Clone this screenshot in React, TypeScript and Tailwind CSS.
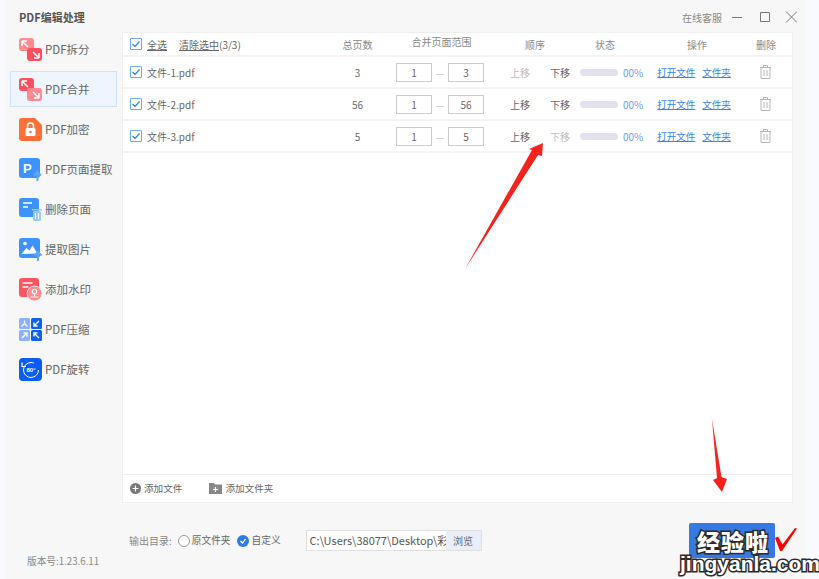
import type { ReactNode } from "react";

function SplitIcon({ merge = false }: { merge?: boolean }) {
    const a = merge ? "#ff4f5e" : "#ff8a90";
    const b = merge ? "#ff8a90" : "#ff4f5e";
    return (
        <svg width="23" height="23" viewBox="0 0 23 23">
            <rect x="0" y="0" width="15" height="13" rx="3" fill={a} />
            <rect x="8" y="10" width="15" height="13" rx="3" fill={b} />
            <path d="M3 3h5M3 3v5M3 3l6 6" stroke="#fff" strokeWidth="1.6" fill="none" />
            <path d="M20 20h-5M20 20v-5M20 20l-6-6" stroke="#fff" strokeWidth="1.6" fill="none" />
        </svg>
    );
}

function LockIcon() {
    return (
        <svg width="23" height="23" viewBox="0 0 23 23">
            <path d="M3 0h13l7 7v13a3 3 0 0 1-3 3H3a3 3 0 0 1-3-3V3a3 3 0 0 1 3-3z" fill="#ff7038" />
            <rect x="6.5" y="10" width="10" height="8" rx="1.5" fill="#fff" />
            <path d="M8.5 10V8a3 3 0 0 1 6 0v2" stroke="#fff" strokeWidth="1.5" fill="none" />
            <circle cx="11.5" cy="14" r="1.2" fill="#ff7038" />
        </svg>
    );
}

function PageIcon() {
    return (
        <svg width="23" height="23" viewBox="0 0 23 23">
            <rect x="0" y="0" width="21" height="20" rx="3" fill="#3b93fb" />
            <text x="4" y="14.5" fontSize="13" fontWeight="700" fill="#fff" fontFamily="Liberation Sans">P</text>
            <path d="M18.5 23v-8M15 17.5l3.5-3.5 3.5 3.5" stroke="#5fa8fb" strokeWidth="2" fill="none" />
        </svg>
    );
}

function DeleteIcon() {
    return (
        <svg width="23" height="23" viewBox="0 0 23 23">
            <rect x="0" y="0" width="20" height="19" rx="3" fill="#3b93fb" />
            <path d="M4 5h9M4 9h5" stroke="#fff" strokeWidth="1.6" />
            <path d="M13 11h10v1.5H13z" fill="#9cc8fd" />
            <rect x="14" y="13" width="8" height="10" rx="1.5" fill="#9cc8fd" />
            <path d="M16.5 15v6M19.5 15v6" stroke="#fff" strokeWidth="1" />
        </svg>
    );
}

function ImageIcon() {
    return (
        <svg width="23" height="23" viewBox="0 0 23 23">
            <rect x="0" y="0" width="21" height="20" rx="3" fill="#3b93fb" />
            <circle cx="6" cy="5.5" r="1.8" fill="#fff" />
            <path d="M2.5 16l5-6 3 2.5 3-5 5 8z" fill="#fff" />
            <path d="M19 23v-8M15.5 17.5l3.5-3.5 3.5 3.5" stroke="#5fa8fb" strokeWidth="2" fill="none" />
        </svg>
    );
}

function WatermarkIcon() {
    return (
        <svg width="23" height="23" viewBox="0 0 23 23">
            <rect x="0" y="0" width="20" height="19" rx="3" fill="#ff5560" />
            <path d="M3.5 5h10M3.5 9h6" stroke="#fff" strokeWidth="1.6" />
            <circle cx="15.5" cy="15.5" r="7.5" fill="#ff8a90" stroke="#fff" strokeWidth="0.8" />
            <circle cx="15.5" cy="13.5" r="2.2" fill="none" stroke="#fff" strokeWidth="1.2" />
            <path d="M11.5 19h8M15.5 15.5V18" stroke="#fff" strokeWidth="1.2" />
        </svg>
    );
}

function CompressIcon() {
    return (
        <svg width="23" height="23" viewBox="0 0 23 23">
            <rect x="0" y="0" width="11" height="11" rx="1.5" fill="#8db2fb" />
            <rect x="12" y="0" width="11" height="11" rx="1.5" fill="#0f5ff0" />
            <rect x="0" y="12" width="11" height="11" rx="1.5" fill="#8db2fb" />
            <rect x="12" y="12" width="11" height="11" rx="1.5" fill="#0f5ff0" />
            <path d="M5.5 2.5v3M5.5 5.5l-3 3M5.5 5.5l3 3" stroke="#fff" strokeWidth="1.1" fill="none" />
            <path d="M20 3l-5 5M15 4.5V8h3.5" stroke="#fff" strokeWidth="1.4" fill="none" />
            <path d="M3 20l5-5M4.5 15H8v3.5" stroke="#fff" strokeWidth="1.4" fill="none" />
            <path d="M20 20l-5-5M15 18.5V15h3.5" stroke="#fff" strokeWidth="1.4" fill="none" />
        </svg>
    );
}

function RotateIcon() {
    return (
        <svg width="23" height="23" viewBox="0 0 23 23">
            <rect x="0" y="0" width="23" height="23" rx="4" fill="#0a5cf5" />
            <circle cx="12" cy="12" r="7.5" fill="none" stroke="#fff" strokeWidth="1" strokeDasharray="38 9" />
            <path d="M3 4.5v4h4" stroke="#fff" strokeWidth="1.2" fill="none" />
            <text x="12" y="14.2" textAnchor="middle" fontSize="6" fontWeight="700" fill="#fff" fontFamily="Liberation Sans">80°</text>
        </svg>
    );
}

function Checkbox() {
    return (
        <span className="flex h-3 w-3 shrink-0 items-center justify-center rounded-[1px] border border-[#6fa8f7] bg-white">
            <svg width="10" height="10" viewBox="0 0 10 10">
                <path d="M1.5 5l2.5 2.5 4.5-5" stroke="#3f86ee" strokeWidth="1.3" fill="none" />
            </svg>
        </span>
    );
}

function TrashIcon() {
    return (
        <svg width="13" height="14" viewBox="0 0 13 14" fill="none" stroke="#b5b5b5" strokeWidth="1">
            <path d="M1 2.5h11M4.5 2.5v-2h4v2M2 2.5v11h9v-11M5 5v6M8 5v6" />
        </svg>
    );
}

const menu: { label: string; icon: ReactNode; active?: boolean }[] = [
    { label: "PDF拆分", icon: <SplitIcon /> },
    { label: "PDF合并", icon: <SplitIcon merge />, active: true },
    { label: "PDF加密", icon: <LockIcon /> },
    { label: "PDF页面提取", icon: <PageIcon /> },
    { label: "删除页面", icon: <DeleteIcon /> },
    { label: "提取图片", icon: <ImageIcon /> },
    { label: "添加水印", icon: <WatermarkIcon /> },
    { label: "PDF压缩", icon: <CompressIcon /> },
    { label: "PDF旋转", icon: <RotateIcon /> },
];

const files = [
    { name: "文件-1.pdf", pages: "3", up: false, down: true },
    { name: "文件-2.pdf", pages: "56", up: true, down: true },
    { name: "文件-3.pdf", pages: "5", up: true, down: false },
];

export default function App() {
    return (
        <div className="relative flex h-[579px] w-[819px] overflow-hidden bg-[#f8fafe] pl-[5px] pr-[14px] font-['Noto_Sans_CJK_SC','Noto_Sans',sans-serif] text-[10px] text-[#666]">
            <div className="flex w-[800px] bg-[#f7f7f7]">
                {/* sidebar */}
                <aside className="flex w-[117px] shrink-0 flex-col">
                    <h1 className="flex h-[31px] items-center pl-[14px] pt-[3px] text-[11px] font-bold text-[#555]">PDF编辑处理</h1>
                    <nav className="flex flex-col gap-1 pl-[5px]">
                        {menu.map((item) => (
                            <div
                                key={item.label}
                                className={`flex h-[36px] w-[107px] items-center gap-[3px] border pl-[8px] text-[11.5px] ${item.active ? "border-[#cfe2fc] bg-[#eef5fe]" : "border-transparent"}`}
                            >
                                {item.icon}
                                <span className="whitespace-nowrap pt-[1px]">{item.label}</span>
                            </div>
                        ))}
                    </nav>
                    <p className="mt-auto pb-[10px] pl-[22px] text-[9.7px] text-[#888]">版本号:1.23.6.11</p>
                </aside>

                {/* main */}
                <main className="flex min-w-0 flex-1 flex-col">
                    <div className="flex h-[32px] shrink-0 items-center justify-end pr-[8px] pt-[2px] text-[#888]">
                        <span className="mr-[10px]">在线客服</span>
                        <svg width="65" height="14" viewBox="0 0 65 14" fill="none" stroke="#777" strokeWidth="1">
                            <path d="M0 7.5h10M28.5 2.5h9v9h-9zM54 1.5l11 11M65 1.5l-11 11" />
                        </svg>
                    </div>

                    <section className="mr-[12px] flex h-[471px] shrink-0 flex-col border border-[#efefef] bg-white">
                        <div className="flex h-[24px] shrink-0 items-center border-b-2 border-[#f4f4f4] text-[#888]">
                            <div className="flex w-[207px] items-center pl-[7px]">
                                <Checkbox />
                                <span className="ml-[5px] text-[#666] underline">全选</span>
                                <span className="ml-[12px] text-[#666]"><span className="underline">清除选中</span>(3/3)</span>
                            </div>
                            <span className="w-[55px] text-center">总页数</span>
                            <span className="w-[113px] pb-[5px] text-center">合并页面范围</span>
                            <span className="w-[74px] text-center">顺序</span>
                            <span className="w-[66px] text-center">状态</span>
                            <span className="w-[118px] text-center">操作</span>
                            <span className="w-[20px] text-center">删除</span>
                        </div>

                        {files.map((file) => (
                            <div key={file.name} className="flex h-[32px] shrink-0 items-center border-b-2 border-[#f4f4f4]">
                                <div className="flex w-[207px] items-center pl-[7px]">
                                    <Checkbox />
                                    <span className="ml-[5px]">{file.name}</span>
                                </div>
                                <span className="w-[55px] text-center">{file.pages}</span>
                                <div className="flex w-[115px] items-center pl-[11px]">
                                    <span className="flex h-[19px] w-[36px] items-center justify-center border border-[#ccc]">1</span>
                                    <span className="w-[16px] text-center text-[#ccc]">—</span>
                                    <span className="flex h-[19px] w-[36px] items-center justify-center border border-[#ccc]">{file.pages}</span>
                                </div>
                                <span className={`ml-[10px] ${file.up ? "" : "text-[#bbb]"}`}>上移</span>
                                <span className={`ml-[20px] ${file.down ? "" : "text-[#bbb]"}`}>下移</span>
                                <span className="ml-[10px] h-[7px] w-[38px] rounded-full bg-[#e2e1f0]" />
                                <span className="ml-[5px] text-[#6b9ff0]">00%</span>
                                <span className="ml-[14px] text-[9.5px] text-[#3a7fee] underline">打开文件</span>
                                <span className="ml-[7px] text-[9.5px] text-[#3a7fee] underline">文件夹</span>
                                <span className="ml-[28px]"><TrashIcon /></span>
                            </div>
                        ))}

                        <div className="mt-auto flex h-[28px] shrink-0 items-center border-t border-[#efefef] pl-[7px] text-[9.6px] text-[#666]">
                            <svg width="11" height="11" viewBox="0 0 11 11">
                                <circle cx="5.5" cy="5.5" r="5.5" fill="#777" />
                                <path d="M5.5 2.5v6M2.5 5.5h6" stroke="#fff" strokeWidth="1.2" />
                            </svg>
                            <span className="ml-[3px]">添加文件</span>
                            <svg className="ml-[27px]" width="13" height="11" viewBox="0 0 13 11">
                                <path d="M0 0h5l1 1.5h7V11H0z" fill="#888" />
                                <path d="M6.5 4v5M4 6.5h5" stroke="#fff" strokeWidth="1.2" />
                            </svg>
                            <span className="ml-[3px]">添加文件夹</span>
                        </div>
                    </section>

                    {/* output row */}
                    <div className="flex flex-1 items-center pb-[1px] pl-[7px] pr-[30px]">
                        <span className="text-[#888]">输出目录:</span>
                        <span className="ml-[6px] h-3 w-3 rounded-full border border-[#999] bg-white" />
                        <span className="ml-[2px] text-[9.7px]">原文件夹</span>
                        <span className="ml-[6px] flex h-3 w-3 items-center justify-center rounded-full bg-[#2f7ae5]">
                            <svg width="8" height="8" viewBox="0 0 8 8">
                                <path d="M1.5 4l2 2 3-4" stroke="#fff" strokeWidth="1.2" fill="none" />
                            </svg>
                        </span>
                        <span className="ml-[3px] text-[9.7px]">自定义</span>
                        <div className="ml-[25px] flex h-[21px] w-[176px] items-stretch border border-[#e0e0e0] bg-white">
                            <span className="w-[139px] whitespace-nowrap pl-[3px] text-[11px] leading-[19px] text-[#555]">C:\Users\38077\Desktop\彩</span>
                            <span className="flex flex-1 items-center justify-center bg-[#e8effb]">浏览</span>
                        </div>
                        <button className="ml-auto h-[35px] w-[86px] rounded-[2px] bg-[#3679e3]" />
                    </div>
                </main>
            </div>

            {/* red annotation arrows */}
            <svg className="pointer-events-none absolute left-0 top-0" width="819" height="579" viewBox="0 0 819 579">
                <path d="M465 269L532 150L529 149L543 143L542 156L538 155z" fill="#f5231c" />
                <path d="M712 419L721.5 477L727 479L722 492L713 480L717 478z" fill="#f5231c" />
                <path d="M775 538l3-1.5 4.5 8L795 528l2 .5L782 551h-2z" fill="#f00" />
            </svg>

            {/* watermark */}
            <span className="absolute left-[697px] top-[530px] text-[23px] font-black leading-none tracking-[1px] text-white [-webkit-text-stroke:3px_#2a2a2a] [paint-order:stroke_fill]">经验啦</span>
            <span className="absolute left-[680px] top-[553px] font-['Liberation_Sans',sans-serif] text-[21px] font-bold leading-none text-white [-webkit-text-stroke:3px_#2a2a2a] [paint-order:stroke_fill]">jingyanla.com</span>
        </div>
    );
}
